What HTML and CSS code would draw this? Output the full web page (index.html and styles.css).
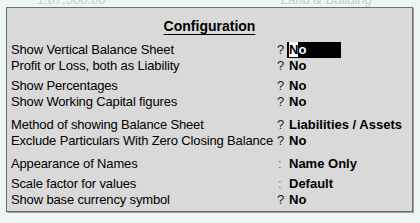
FILE: index.html
```html
<!DOCTYPE html>
<html lang="en">
<head>
<meta charset="UTF-8">
<title>Configuration</title>
<link rel="stylesheet" href="styles.css">
</head>
<body>
<div class="behind">
  <span class="amt">1,87,500.00</span>
  <span class="ledger">Land &amp; Building</span>
</div>
<div class="panel">
  <div class="title"><span>Configuration</span></div>
  <div class="rows">
    <div class="lbl">Show Vertical Balance Sheet</div><div class="q">?</div><div class="val"><span class="sel"><span class="cur">N</span>o</span></div>
    <div class="lbl">Profit or Loss, both as Liability</div><div class="q">?</div><div class="val">No</div>

    <div class="lbl grp">Show Percentages</div><div class="q grp">?</div><div class="val grp">No</div>
    <div class="lbl">Show Working Capital figures</div><div class="q">?</div><div class="val">No</div>

    <div class="lbl grp2">Method of showing Balance Sheet</div><div class="q grp2">?</div><div class="val grp2">Liabilities / Assets</div>
    <div class="lbl">Exclude Particulars With Zero Closing Balance</div><div class="q">?</div><div class="val">No</div>

    <div class="lbl grp2">Appearance of Names</div><div class="q colon grp2">:</div><div class="val grp2">Name Only</div>

    <div class="lbl grp">Scale factor for values</div><div class="q colon grp">:</div><div class="val grp">Default</div>
    <div class="lbl">Show base currency symbol</div><div class="q">?</div><div class="val">No</div>
  </div>
</div>
</body>
</html>
```

FILE: styles.css
```css
body {
  margin: 0;
  background: #eef6f5;
  font-family: "Liberation Sans", Arial, sans-serif;
  font-size: 13px;
  color: #000;
  width: 420px;
  height: 223px;
  overflow: hidden;
  position: relative;
}
.behind {
  position: absolute;
  top: -8px;
  left: 0;
  width: 420px;
  color: #c6cfd0;
  font-style: italic;
  font-size: 13px;
}
.amt {
  position: absolute;
  left: 37px;
}
.ledger {
  position: absolute;
  left: 281px;
}
.panel {
  position: relative;
  margin: 7px 0 0 6px;
  width: 405px;
  height: 203px;
  background: #d9d9d9;
  border: 1px solid #6f6f6f;
  box-shadow: 1px 1px 0 #a0a0a0;
}
.title {
  text-align: center;
  font-weight: bold;
  font-size: 14px;
  padding-top: 10px;
  height: 24px;
}
.title span {
  text-decoration: underline;
  text-underline-offset: 3px;
}
.rows {
  display: grid;
  grid-template-columns: 266px 12px auto;
  padding-left: 4px;
  line-height: 16px;
}
.lbl {
  white-space: nowrap;
  letter-spacing: -0.15px;
}
.q {
  color: #222;
}
.colon {
  color: #777;
  padding-left: 1px;
}
.val {
  font-weight: bold;
  white-space: nowrap;
}
.grp {
  margin-top: 4px;
}
.grp2 {
  margin-top: 7px;
}
.sel {
  display: inline-block;
  background: #000;
  color: #fff;
  width: 52px;
  padding-left: 2px;
  margin-left: -2px;
}
.cur {
  background: #fff;
  color: #000;
}
```
